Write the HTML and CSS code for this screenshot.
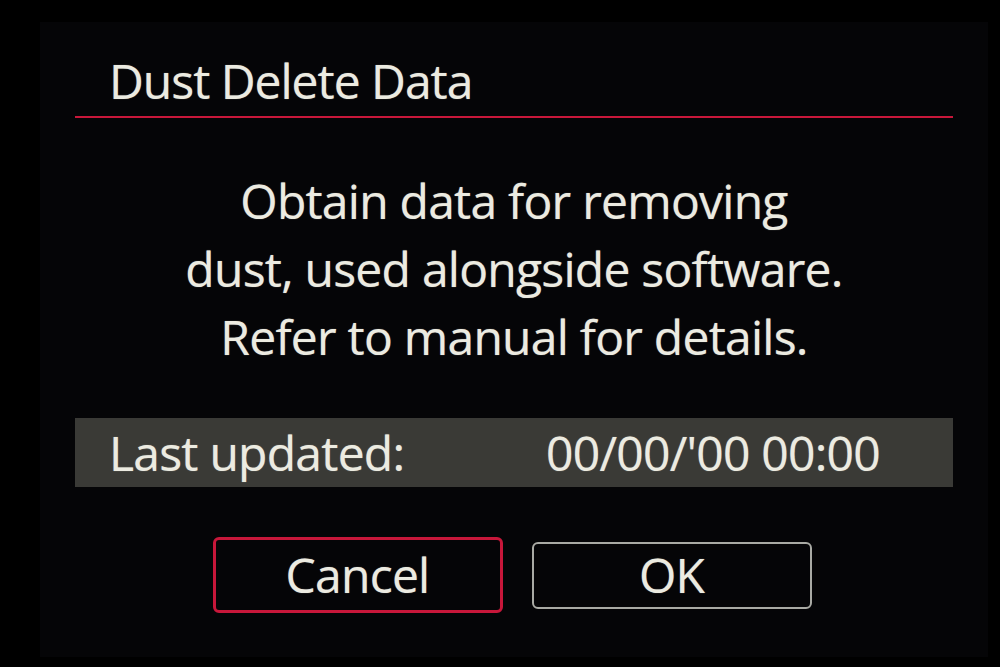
FILE: index.html
```html
<!DOCTYPE html>
<html lang="en">
<head>
<meta charset="utf-8">
<title>Dust Delete Data</title>
<link rel="stylesheet" href="styles.css">
</head>
<body>
<div class="screen">
  <div class="header"><h1 class="title">Dust Delete Data</h1></div>
  <div class="message">
    <p>Obtain data for removing</p>
    <p>dust, used alongside software.</p>
    <p>Refer to manual for details.</p>
  </div>
  <div class="info-bar">
    <span class="label">Last updated:</span>
    <span class="value">00/00/'00 00:00</span>
  </div>
  <div class="buttons">
    <div class="btn btn-focus">Cancel</div>
    <div class="btn">OK</div>
  </div>
</div>
</body>
</html>
```
FILE: styles.css
```css
html, body {
  margin: 0;
  padding: 0;
  background: #000;
}
body {
  font-family: "Open Sans", "Noto Sans", sans-serif;
  color: #ecebe1;
  width: 1000px;
  height: 667px;
  overflow: hidden;
  letter-spacing: -0.75px;
  text-shadow: 0 0 1px rgba(236, 235, 225, 0.6);
}
.screen {
  margin: 22px 12px 0 40px;
  height: 635px;
  background: #050507;
  padding: 0 35px;
  box-sizing: border-box;
}
.header {
  height: 94px;
  border-bottom: 2px solid #c8173a;
  display: flex;
  align-items: flex-end;
  padding-left: 34px;
}
.title {
  margin: 0 0 1px 0;
  font-size: 48px;
  font-weight: 400;
  line-height: 68px;
  letter-spacing: -1px;
}
.message {
  margin-top: 49px;
  text-align: center;
  font-size: 48px;
  line-height: 68px;
}
.message p {
  margin: 0;
}
.info-bar {
  margin-top: 47px;
  height: 69px;
  background: #3a3a36;
  display: grid;
  grid-template-columns: 437px auto;
  align-items: center;
  padding-left: 34px;
  font-size: 48px;
  line-height: 69px;
}
.buttons {
  margin-top: 50px;
  padding-right: 4px;
  display: flex;
  justify-content: center;
  align-items: center;
  gap: 29px;
}
.btn {
  width: 280px;
  height: 67px;
  box-sizing: border-box;
  border: 2px solid #a9aaa4;
  border-radius: 6px;
  display: flex;
  align-items: center;
  justify-content: center;
  font-size: 48px;
  line-height: 1;
}
.btn-focus {
  width: 290px;
  height: 76px;
  border: 3px solid #c8173a;
  border-radius: 6px;
}
```
